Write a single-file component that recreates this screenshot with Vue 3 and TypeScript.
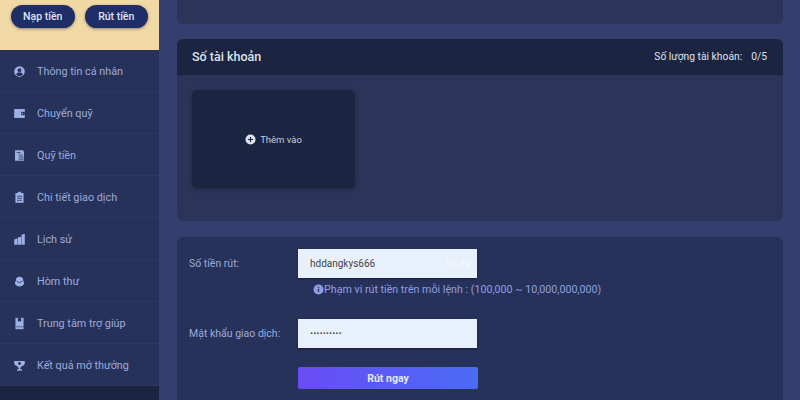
<template>
  <div class="page">
    <aside class="sidebar">
      <div class="wallet">
        <button class="pill">Nạp tiền</button>
        <button class="pill">Rút tiền</button>
      </div>
      <ul class="menu">
        <li v-for="item in menu" :key="item.label" class="menu-item">
          <svg class="menu-icon" viewBox="0 0 16 16" v-html="item.icon"></svg>
          <span>{{ item.label }}</span>
        </li>
        <li class="menu-item active"></li>
      </ul>
    </aside>

    <main class="content">
      <section class="card top-card"></section>

      <section class="card account-card">
        <header class="card-header">
          <h2>Số tài khoản</h2>
          <span class="count">Số lượng tài khoản:<b>0/5</b></span>
        </header>
        <div class="account-body">
          <div class="add-box">
            <svg class="plus" viewBox="0 0 12 12">
              <circle cx="6" cy="6" r="5.5" fill="#dfe3ea" />
              <path d="M3.2 6h5.6M6 3.2v5.6" stroke="#1b2440" stroke-width="1.3" />
            </svg>
            <span>Thêm vào</span>
          </div>
        </div>
      </section>

      <section class="card form-card">
        <div class="form-row">
          <label>Số tiền rút:</label>
          <div class="field">
            <span>hddangkys666</span>
            <em>Tối đa</em>
          </div>
        </div>
        <p class="hint">
          <svg class="info" viewBox="0 0 12 12">
            <circle cx="6" cy="6" r="5.5" fill="#8f9fe0" />
            <path d="M6 5.2v3.6M6 3v1.2" stroke="#27325a" stroke-width="1.4" />
          </svg>
          <span>Phạm vi rút tiền trên mỗi lệnh : (100,000 ~ 10,000,000,000)</span>
        </p>
        <div class="form-row second">
          <label>Mật khẩu giao dịch:</label>
          <div class="field"><span class="dots">··········</span></div>
        </div>
        <button class="submit">Rút ngay</button>
      </section>
    </main>
  </div>
</template>

<script setup lang="ts">
interface MenuItem {
  label: string
  icon: string
}

const fill = 'fill="#9fb0e6"'

const menu: MenuItem[] = [
  {
    label: 'Thông tin cá nhân',
    icon: `<circle cx="8" cy="8" r="6.5" ${fill}/><circle cx="8" cy="6.4" r="2.3" fill="#27325a"/><path d="M3.8 12.2c.8-2.4 2.4-3.2 4.2-3.2s3.4.8 4.2 3.2c-2.4 1.8-6 1.8-8.4 0z" fill="#27325a"/>`
  },
  {
    label: 'Chuyển quỹ',
    icon: `<path d="M1.500 2.500h13v11h-13z" ${fill}/><path d="M10 6h4.500v4H10z" fill="#27325a"/><circle cx="11.500" cy="8" r=".9" ${fill}/>`
  },
  {
    label: 'Quỹ tiền',
    icon: `<path d="M2.500 1.500h9.500l1.500 1.500V14.500h-11z" ${fill}/><path d="M7 7.500h5M7 10h6M7 12.500h6" stroke="#27325a"/><path d="M4.500 4.500h5" stroke="#27325a"/>`
  },
  {
    label: 'Chi tiết giao dịch',
    icon: `<path d="M3 2.500h10V14.500H3z" ${fill}/><path d="M6 1h4v2H6z" ${fill}/><path d="M5 6.500h6M5 9h6M5 11.500h6" stroke="#27325a"/>`
  },
  {
    label: 'Lịch sử',
    icon: `<path d="M1.500 8l4-1.500V14.500h-4zM6 5.500l4-1V14.500H6zM10.500 2l4-1V14.500h-4z" ${fill}/>`
  },
  {
    label: 'Hòm thư',
    icon: `<circle cx="8" cy="6.500" r="4.500" ${fill}/><path d="M2.500 8h11v3c-1 2-3 3-5.500 3s-4.500-1-5.500-3z" ${fill}/><path d="M4.500 7.500L8 9.500l3.500-2" stroke="#27325a" fill="none"/>`
  },
  {
    label: 'Trung tâm trợ giúp',
    icon: `<path d="M3 1h10v14H3z" ${fill}/><path d="M6 1h4v5L8 4.700 6 6z" fill="#27325a"/><path d="M3 12h10" stroke="#27325a" stroke-width=".7"/>`
  },
  {
    label: 'Kết quả mở thưởng',
    icon: `<path d="M1.500 2.500h13v2.500c0 2-1.500 3.500-3.500 3.700C10.300 10 9.300 10.600 9 11v1.500h2V14.500H5V12.500h2V11c-.3-.4-1.300-1-2-2.300C3 8.500 1.500 7 1.500 5z" ${fill}/><circle cx="8" cy="5.500" r="1.800" fill="#27325a"/>`
  }
]
</script>

<style>
html,
body {
  margin: 0;
  background: #33406f;
}
</style>

<style scoped>
.page {
  display: flex;
  width: 800px;
  height: 400px;
  overflow: hidden;
  background: #33406f;
  font-family: Roboto, "Liberation Sans", Arial, sans-serif;
}

.sidebar {
  flex: 0 0 159px;
  background: #27325a;
}

.wallet {
  display: flex;
  gap: 10px;
  justify-content: center;
  box-sizing: border-box;
  height: 50px;
  padding: 5px 11px 0 11px;
  background: #f0d9a5;
}

.pill {
  flex: 1;
  height: 23px;
  padding: 0;
  border: none;
  border-radius: 12px;
  background: #1f2e66;
  color: #dfe5f5;
  font: 500 10.500px Roboto, "Liberation Sans", sans-serif;
  box-shadow: 0 1px 3px rgba(40, 40, 60, 0.5);
}

.menu {
  margin: 0;
  padding: 0;
  list-style: none;
}

.menu-item {
  display: flex;
  align-items: center;
  gap: 11px;
  box-sizing: border-box;
  height: 42px;
  padding: 1px 0 0 13px;
  border-bottom: 1px solid #2e3963;
  color: #9dabdc;
  font-size: 10.800px;
}

.menu-item.active {
  background: #1b2440;
  border-bottom: none;
}

.menu-icon {
  flex: 0 0 13px;
  width: 13px;
  height: 13px;
}

.content {
  flex: 1;
  display: flex;
  flex-direction: column;
  gap: 15px;
  min-width: 0;
  padding: 0 17px 0 18px;
}

.card {
  flex: none;
  border-radius: 6px;
  background: #2b3559;
}

.top-card {
  height: 24px;
  border-radius: 0 0 6px 6px;
}

.account-card {
  height: 182px;
}

.card-header {
  display: flex;
  align-items: center;
  justify-content: space-between;
  height: 36px;
  padding: 0 16px 2px 15px;
  box-sizing: border-box;
  border-radius: 6px 6px 0 0;
  background: #1b2440;
  color: #dfe3ea;
}

.card-header h2 {
  margin: 0;
  font-size: 12.500px;
  font-weight: 500;
}

.count {
  font-size: 10.300px;
}

.count b {
  margin-left: 9px;
  font-weight: 400;
}

.account-body {
  padding: 15px 15px;
}

.add-box {
  display: flex;
  align-items: center;
  justify-content: center;
  gap: 4px;
  width: 163px;
  height: 98px;
  border-radius: 5px;
  background: #1b2440;
  color: #c9ced9;
  font-size: 9.500px;
  box-shadow: 0 1px 4px rgba(20, 26, 50, 0.5);
}

.plus {
  width: 11px;
  height: 11px;
}

.form-card {
  flex: 1;
  margin-top: 1px;
  padding: 12px 0 0 12px;
  background: #27325a;
  min-height: 170px;
}

.form-row {
  display: flex;
  align-items: center;
}

.form-row.second {
  margin-top: 23px;
}

.form-row label {
  flex: 0 0 109px;
  color: #9dabdc;
  font-size: 10.500px;
}

.field {
  display: flex;
  align-items: center;
  justify-content: space-between;
  box-sizing: border-box;
  width: 179px;
  height: 29px;
  padding: 0 7px 0 12px;
  background: #e8f0fb;
  color: #444;
  font-size: 10px;
  box-shadow: 0 1px 2px rgba(10, 14, 30, 0.6);
}

.field em {
  color: #f5f8fd;
  font-size: 9px;
  font-style: normal;
  font-weight: 500;
}

.dots {
  font-size: 10.500px;
  font-weight: 700;
}

.hint {
  display: flex;
  align-items: center;
  margin: 5px 0 0 124px;
  color: #8f9fe0;
  font-size: 10.700px;
  white-space: nowrap;
}

.info {
  flex: none;
  width: 11px;
  height: 11px;
}

.submit {
  display: block;
  width: 180px;
  height: 22px;
  margin: 19px 0 0 109px;
  padding: 0;
  border: none;
  border-radius: 2px;
  background: linear-gradient(90deg, #6a4cf5, #4a6cf5);
  color: #e4e8f8;
  font: 700 10.500px Roboto, "Liberation Sans", sans-serif;
}
</style>
